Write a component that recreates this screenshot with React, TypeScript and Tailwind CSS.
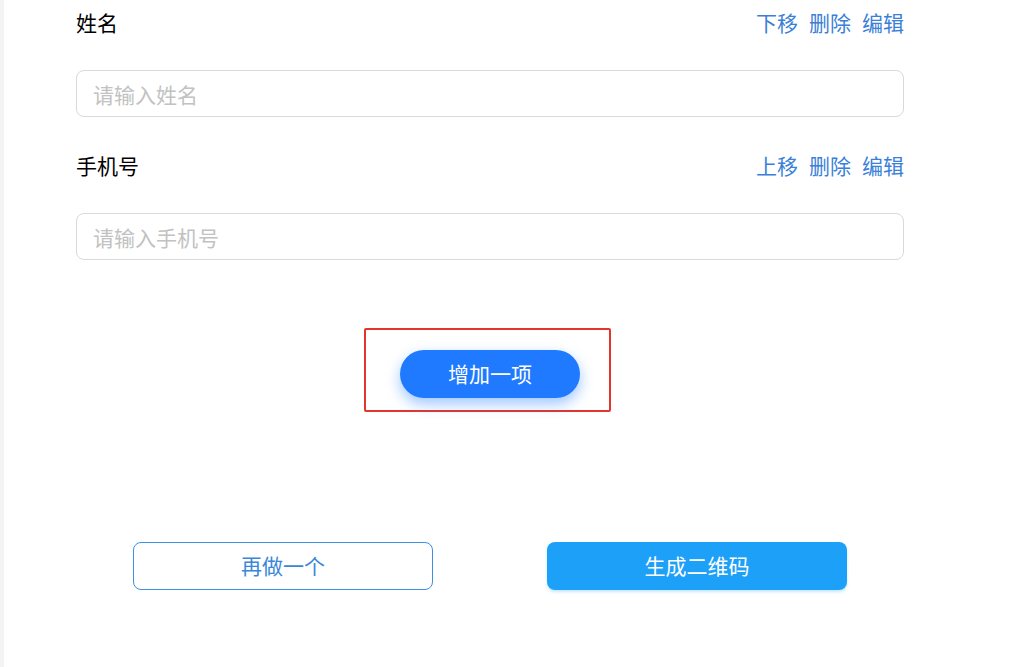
import { useState } from 'react';

type Field = { label: string; placeholder: string; move: string };

const fields: Field[] = [
  { label: '姓名', placeholder: '请输入姓名', move: '下移' },
  { label: '手机号', placeholder: '请输入手机号', move: '上移' },
];

const font = { fontFamily: '"Microsoft YaHei", "Noto Sans CJK SC", sans-serif' };

export default function App() {
  const [values, setValues] = useState<string[]>(['', '']);

  return (
    <div className="flex min-h-[667px] w-full bg-white" style={font}>
      <div className="w-[4px] shrink-0 bg-[#f4f4f4]" />
      <div className="ml-[72px] w-[828px]">
        {fields.map((f, i) => (
          <div key={f.label} className={i === 0 ? '' : 'mt-[26px]'}>
            <div className="flex h-[46px] items-center justify-between text-[21px]">
              <span className="text-black">{f.label}</span>
              <div className="flex gap-[11px] text-[#3a7fd8]">
                <span>{f.move}</span>
                <span>删除</span>
                <span>编辑</span>
              </div>
            </div>
            <input
              value={values[i]}
              onChange={(e) => {
                const next = [...values];
                next[i] = e.target.value;
                setValues(next);
              }}
              placeholder={f.placeholder}
              className="mt-[24px] h-[47px] w-full rounded-[8px] border border-[#d9d9d9] pl-[16px] text-[21px] outline-none placeholder:text-[#c2c2c2]"
            />
          </div>
        ))}

        <div className="ml-[288px] mt-[68px] h-[84px] w-[247px] rounded-[2px] border-2 border-[#e2352d] pl-[34px] pt-[20px]">
          <button className="h-[48px] w-[180px] rounded-full bg-[#1f7aff] text-[21px] text-white shadow-[0_6px_14px_rgba(40,130,255,0.45)]">
            增加一项
          </button>
        </div>

        <div className="ml-[57px] mt-[130px] flex gap-[114px]">
          <button className="h-[48px] w-[300px] rounded-[8px] border border-[#3c8fe2] text-[21px] text-[#3a86d9]">
            再做一个
          </button>
          <button className="h-[48px] w-[300px] rounded-[8px] bg-[#1da0f8] text-[21px] text-white shadow-[0_2px_3px_rgba(29,160,248,0.25)]">
            生成二维码
          </button>
        </div>
      </div>
    </div>
  );
}
